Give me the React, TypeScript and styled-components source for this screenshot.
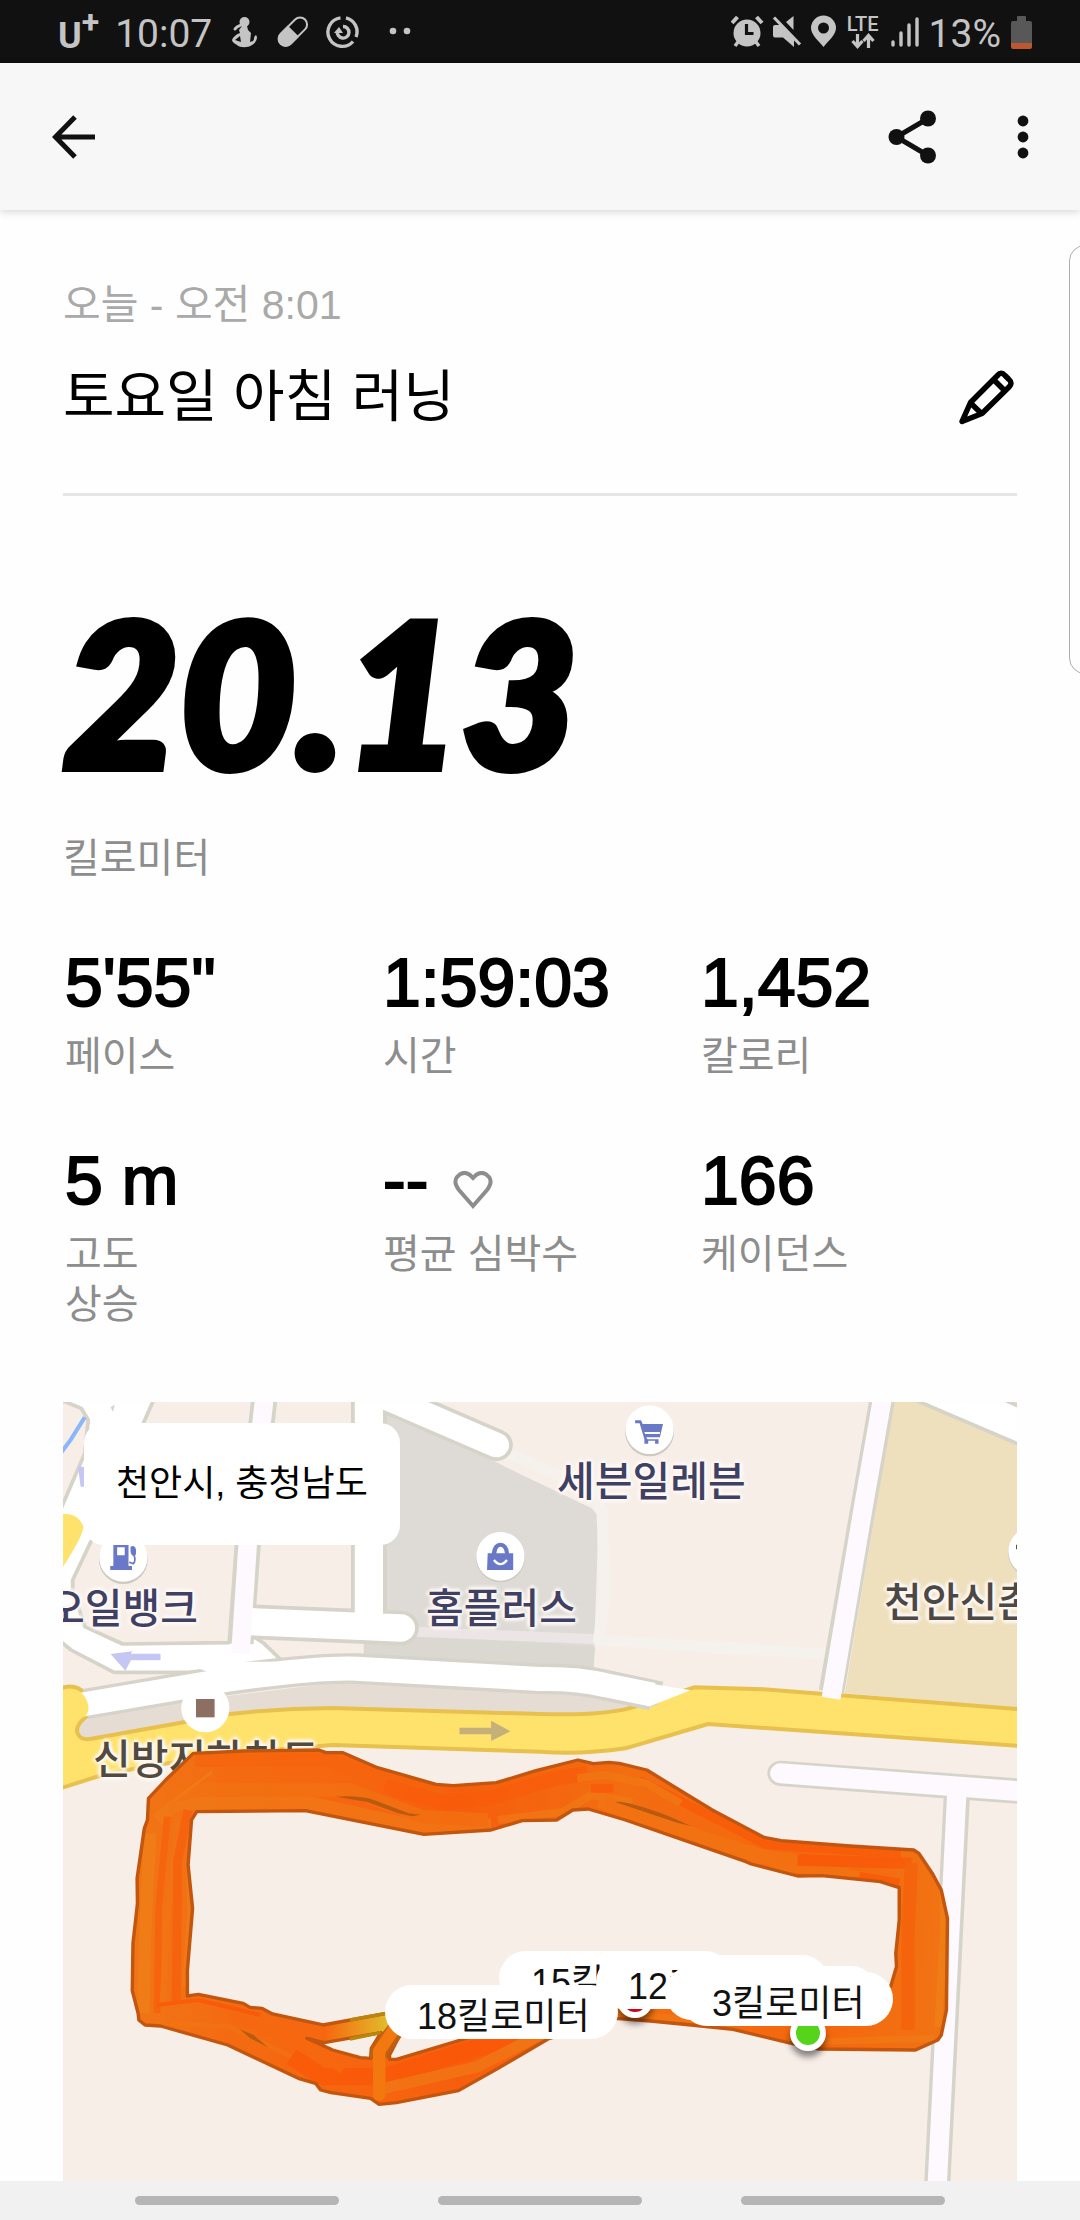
import React from "react";
import styled, { createGlobalStyle } from "styled-components";

const GlobalStyle = createGlobalStyle`
  * { box-sizing: border-box; }
  body { margin: 0; background: #fefefe; }
  button { border: 0; padding: 0; background: none; color: inherit; cursor: pointer; }
`;

const sans = `"Liberation Sans", "Noto Sans CJK KR", sans-serif`;

const Screen = styled.div`
  position: relative;
  display: flex;
  flex-direction: column;
  min-height: 100vh;
  overflow: hidden;
  background: #fefefe;
  color: #000;
  font-family: ${sans};
`;

const StatusBar = styled.header`
  display: flex;
  justify-content: space-between;
  height: 63px;
  padding: 0 48px 0 58px;
  background: #111;
  color: #c4c4c4;
  font-family: Roboto, sans-serif;
`;

const StatusGroup = styled.div<{ $gap: number }>`
  display: flex;
  align-items: center;
  gap: ${(p) => p.$gap}px;
`;

const Carrier = styled.span`
  display: flex;
  font-size: 36px;
  font-weight: 700;
  line-height: 48px;
  padding-top: 8px;
`;

const CarrierPlus = styled.span`
  font-size: 32px;
  line-height: 20px;
`;

const StatusText = styled.span`
  font-size: 39px;
  font-weight: 400;
  line-height: 48px;
  padding-top: 4px;
`;

const Network = styled.span`
  display: flex;
  flex-direction: column;
  align-items: center;
  font-size: 20px;
  font-weight: 500;
  line-height: 18px;
`;

const AppBar = styled.nav`
  position: relative;
  z-index: 1;
  display: flex;
  align-items: center;
  gap: 27px;
  height: 147px;
  padding: 0 15px 0 32px;
  background: #f7f7f7;
  box-shadow: 0 2px 8px rgba(0, 0, 0, 0.16);
`;

const BarButton = styled.button<{ $push?: boolean }>`
  display: flex;
  align-items: center;
  justify-content: center;
  width: 84px;
  height: 84px;
  margin-left: ${(p) => (p.$push ? "auto" : "0")};
  svg { display: block; }
`;

const Content = styled.main`
  flex: 1;
  display: flex;
  flex-direction: column;
  padding: 70px 63px 0;
`;

const DateLine = styled.p`
  margin: 0 0 35px;
  color: #a9a9a9;
  font-size: 41px;
  line-height: 50px;
`;

const TitleRow = styled.div`
  display: flex;
  align-items: center;
  justify-content: space-between;
  padding-bottom: 64px;
  border-bottom: 3px solid #e5e5e5;
`;

const Title = styled.h1`
  margin: 0;
  font-size: 56px;
  font-weight: 400;
  line-height: 64px;
`;

const EditButton = styled.button`
  width: 60px;
  height: 60px;
  svg { display: block; }
`;

const Distance = styled.div`
  display: flex;
  flex-direction: column;
  gap: 42px;
  padding: 95px 0 60px;
`;

const DistanceValue = styled.strong`
  font-family: Lato, sans-serif;
  font-size: 201px;
  font-style: italic;
  font-weight: 900;
  line-height: 200px;
  -webkit-text-stroke: 8px #000;
`;

const Label = styled.span`
  color: #8d8d8d;
  font-size: 40px;
  line-height: 50px;
`;

const Stats = styled.dl`
  display: grid;
  grid-template-columns: repeat(3, 1fr);
  row-gap: 60px;
  margin: 0 0 73px;
`;

const Stat = styled.div`
  display: flex;
  flex-direction: column-reverse;
  justify-content: flex-end;
  gap: 10px;
  padding-left: 2px;
`;

const StatValue = styled.dd`
  display: flex;
  align-items: center;
  gap: 25px;
  margin: 0;
  font-size: 68px;
  line-height: 78px;
  -webkit-text-stroke: 2px #000;
  svg { margin-top: 20px; }
`;

const MapPanel = styled.section`
  position: relative;
  flex: 1;
  min-height: 600px;
  overflow: hidden;
  background: #f7eee8;
`;

const MapLayer = styled.svg`
  position: absolute;
  left: 0;
  top: 0;
  display: block;
`;

const Place = styled.span<{ $x: number; $y: number; $color: string }>`
  position: absolute;
  left: ${(p) => p.$x}px;
  top: ${(p) => p.$y}px;
  color: ${(p) => p.$color};
  font-size: 41px;
  font-weight: 500;
  line-height: 50px;
  white-space: nowrap;
  text-shadow: 0 0 3px #fff8f4, 3px 0 3px #fff8f4, -3px 0 3px #fff8f4, 0 3px 3px #fff8f4, 0 -3px 3px #fff8f4;
`;

const CityCard = styled.div`
  position: absolute;
  left: 21px;
  top: 21px;
  padding: 36px 32px;
  border-radius: 20px;
  background: #fff;
  font-size: 36px;
  line-height: 50px;
  white-space: nowrap;
`;

const Marker = styled.span<{ $x: number; $y: number; $color: string }>`
  position: absolute;
  left: ${(p) => p.$x}px;
  top: ${(p) => p.$y}px;
  width: 36px;
  height: 36px;
  border: 6px solid #fff;
  border-radius: 50%;
  background: ${(p) => p.$color};
  box-shadow: 0 6px 6px rgba(0, 0, 0, 0.45);
`;

const KmPill = styled.span<{ $x: number; $y: number }>`
  position: absolute;
  left: ${(p) => p.$x}px;
  top: ${(p) => p.$y}px;
  padding: 10px 28px 0 32px;
  border-radius: 27px;
  background: #fff;
  color: #111;
  font-size: 36px;
  line-height: 44px;
  white-space: nowrap;
`;

const EdgeHandle = styled.div`
  position: absolute;
  z-index: 2;
  top: 245px;
  right: -29px;
  width: 40px;
  height: 429px;
  border: 1px solid #adadad;
  border-radius: 16px;
`;

const SystemNav = styled.footer`
  display: flex;
  align-items: center;
  justify-content: center;
  gap: 99px;
  height: 39px;
  background: #f1f1f1;
`;

const NavButton = styled.button`
  width: 204px;
  height: 9px;
  border-radius: 5px;
  background: #b5b5b5;
`;

const stats = [
  { value: `5'55"`, label: "페이스" },
  { value: "1:59:03", label: "시간" },
  { value: "1,452", label: "칼로리" },
  { value: "5 m", label: "고도\n상승" },
  { value: "--", label: "평균 심박수", heart: true },
  { value: "166", label: "케이던스" },
];

const StatLabel = styled(Label)`
  white-space: pre-line;
`;

const kilometres = [
  { km: 15, x: 436, y: 549 },
  { km: 18, x: 322, y: 583 },
  { km: 12, x: 533, y: 553 },
  { km: 6, x: 602, y: 564 },
  { km: 3, x: 617, y: 570 },
];

const INK = "#c4c4c4";

function NotificationIcons() {
  return (
    <svg width="184" height="36" viewBox="231 14 184 36" fill={INK} aria-hidden="true">
      <circle cx="247.500" cy="22" r="5" />
      <path d="M245 26h5l1 4 3 3-1 9 3-1c2-2 0-4 3-6l1 2c0 4-3 7-5 8-4 3-12 3-15 0-3-2-5-3-5-5 1-3 5-6 8-7l-1-3z" />
      <path d="M238 29l2-2 4-2" stroke={INK} strokeWidth="3" fill="none" strokeLinecap="round" />
      <path d="M238 40l5-4 1 6z" fill="#111" />
      <g transform="rotate(45 296 31.500)">
        <rect x="289" y="14.500" width="14" height="34" rx="7" fill="none" stroke={INK} strokeWidth="2" />
        <path d="M288 31h16v11a8 8 0 0 1-16 0z" />
      </g>
      <g fill="none" stroke={INK} strokeWidth="3.400">
        <path d="M349 17.800A14.300 14.300 0 0 1 359 37" />
        <path d="M356 41.500A14.300 14.300 0 1 1 343.500 17.900" />
        <path d="M346 26.500A5.800 5.800 0 1 1 340.500 31" />
      </g>
      <path d="M337 33l5-6 4 6z" />
      <circle cx="396" cy="31" r="3.300" />
      <circle cx="410" cy="31" r="3.300" />
    </svg>
  );
}

function SystemIcons() {
  return (
    <svg width="106" height="36" viewBox="728 14 106 36" fill={INK} aria-hidden="true">
      <circle cx="744" cy="33" r="13.500" />
      <path d="M729 23l5.500-6M759 23l-5.500-6" stroke={INK} strokeWidth="4" />
      <path d="M735 42l-3 4M753 42l3 4" stroke={INK} strokeWidth="3.500" />
      <path d="M743.500 24v9.500h7" fill="none" stroke="#111" strokeWidth="3.200" />
      <path d="M770 27q0-2 2-2h7l12 13v9l-11-9.500h-8q-2 0-2-2z" />
      <path d="M783 22l7.500-6v14z" />
      <path d="M771 17.500l26 27" stroke={INK} strokeWidth="3.200" />
      <path fillRule="evenodd" d="M820.500 15.500a12.500 12.500 0 0 1 12.500 12.500c0 7-8 13-12.500 19-4.500-6-12.500-12-12.500-19a12.500 12.500 0 0 1 12.500-12.500zm0 7a5.500 5.500 0 1 0 0 11a5.500 5.500 0 1 0 0-11z" />
    </svg>
  );
}

function BaseMap() {
  return (
    <MapLayer width="954" height="779" viewBox="0 0 954 779" aria-hidden="true">
      <g transform="translate(-23 -22) scale(0.34439 0.33333)" strokeLinejoin="round">
        <path fill="#dedbd6" d="M1000 60L1350 260 1602 385 1622 410 1607 870 960 860V60z" />
        <path fill="#dbd7d1" d="M940 790L1100 765 1612 800 1607 870 940 840z" />
        <path fill="none" stroke="#ebe5e5" strokeWidth="30" d="M1090 755L1616 778" />
        <path fill="none" stroke="#f5f2ed" strokeWidth="32" d="M1350 215L1602 330 1632 395 1640 640 1622 780 2272 822" />
        <path fill="#eedfbd" d="M2479 66H2850V985L2337 940z" />
        <path fill="#fff" stroke="#d6d3c9" strokeWidth="11" d="M2530 55L2845 194V80L2790 55z" />

        <path fill="#fff" stroke="#d6d3c9" strokeWidth="11" d="M50 60L75 66 120 85 140 120 130 220 55 400V780L90 810 215 877H560L700 840 650 790 610 762 548 788 240 792 130 740 95 630V600L150 480 330 60z" />
        <path fill="#d6d3c9" d="M205 82l12-8-5 22z" />

        <path fill="none" stroke="#d6d3c9" strokeWidth="76" d="M652 50L603 495 582 790" />
        <g fill="none" stroke="#d6d3c9" strokeWidth="104" strokeLinecap="round">
          <path d="M955 20V735M600 725L950 740 1048 744" />
          <path d="M1000 50L1325 195" strokeWidth="96" />
        </g>
        <g fill="none" stroke="#fff" strokeWidth="82" strokeLinecap="round">
          <path d="M955 20V735M610 725L950 740 1048 744" />
          <path d="M1000 50L1325 195" strokeWidth="74" />
        </g>
        <path fill="none" stroke="#fdf9ff" strokeWidth="54" d="M652 50L603 495 582 820" />

        <path fill="#e5ddd4" d="M130 1080L105 1045 140 1000 920 900 1568 935 1760 975 1552 1020 850 990z" />
        <path fill="#ffe26b" stroke="#e8c04d" strokeWidth="12" d="M50 930Q100 905 130 940L140 1005Q95 1040 112 1065 122 1082 150 1076L550 1002 Q700 985 850 984L1480 1003H1552Q1660 1000 1720 982L1900 922 2100 928 2850 988V1098L1940 1032 1700 1105Q1568 1125 1452 1115L850 1095Q500 1120 190 1182L50 1228z" />
        <path fill="none" stroke="#d6d3c9" strokeWidth="92" d="M132 972L540 900Q800 862 920 866L1450 897Q1560 895 1640 915L1800 950" />
        <path fill="#fff" d="M1740 905L1890 931 1772 978 1700 960z" />
        <path fill="none" stroke="#fff" strokeWidth="72" d="M115 975L540 900Q800 862 920 866L1450 897Q1560 895 1640 915L1780 944" />
        <path fill="#fff" d="M400 845L680 845 800 865 560 900z" />
        <path fill="#ffe26b" d="M67 936Q105 918 127 946 150 980 135 1005L67 1050z" />
        <path fill="#ffe26b" d="M67 402Q110 398 126 440 126 465 67 560z" />
        <path fill="#ffe26b" d="M1770 982L1910 932V1010H1770z" />

        <path fill="none" stroke="#d6d3c9" strokeWidth="74" d="M2447 50L2390 385 2298 935" />
        <path fill="none" stroke="#fdf9ff" strokeWidth="55" d="M2447 50L2390 385 2297 955" />
        <g fill="none" stroke="#d6d3c9" strokeWidth="76">
          <path strokeLinecap="round" d="M2150 1180L2850 1234" />
          <path d="M2663 1230L2605 2420" />
        </g>
        <g fill="none" stroke="#fdf9ff" strokeWidth="60">
          <path strokeLinecap="round" d="M2150 1180L2850 1234" />
          <path strokeWidth="56" d="M2663 1220L2605 2420" />
        </g>

        <path fill="none" stroke="#8ab7fb" strokeWidth="12" d="M60 220L90 178 130 112" />
        <path fill="#c6c6f5" d="M110 258L130 262V320H118zM205 822L268 814 264 821H350V841H264L248 872z" />
        <path fill="#c5b07a" d="M1218 1043H1310V1022L1366 1054 1310 1083V1063H1218z" />

        <g fill="#cfc9c4">
          <ellipse cx="242" cy="539" rx="71" ry="73" />
          <ellipse cx="1337" cy="534" rx="71" ry="73" />
          <ellipse cx="1770" cy="156" rx="71" ry="73" />
          <ellipse cx="2882" cy="519" rx="71" ry="73" />
        </g>
        <g fill="#fff">
          <ellipse cx="242" cy="532" rx="70" ry="73" />
          <ellipse cx="1337" cy="529" rx="70" ry="73" />
          <ellipse cx="1770" cy="149" rx="70" ry="73" />
          <ellipse cx="480" cy="984" rx="70" ry="73" />
          <ellipse cx="2882" cy="514" rx="70" ry="73" />
        </g>
        <path fill="#8d6e63" d="M453 957h54v55h-54z" />
        <path fill="#5d5750" d="M2834 494h10v14h-10z" />
        <g fill="#6a78c8">
          <path fillRule="evenodd" d="M213 480H257V558H267V570H204V558H213zM224 502V526H246V502z" />
          <path d="M263 500q16-8 16 16 0 14-8 12-8-4-8-14z" />
          <path fill="none" stroke="#6a78c8" strokeWidth="5" d="M273 525q6 18-2 26l-12-4" />
          <path fillRule="evenodd" d="M1300 520H1312Q1315 488 1337 488 1359 488 1362 520H1374V570H1298zM1325 520H1350Q1348 500 1337 500 1327 500 1325 520z" />
          <path fill="none" stroke="#fff" strokeWidth="7" d="M1318 540Q1337 565 1356 540" />
          <path d="M1728 121H1745L1750 132H1809L1800 172H1760L1764 178H1796V191H1786V182H1766V191H1755V178L1741 130H1728z" />
          <path fill="#fff" d="M1755 156H1800V162H1757z" />
        </g>
      </g>
    </MapLayer>
  );
}

const routeShape =
  "M315 235L365 180 445 100 590 93 810 90 830 98H880L980 143 1150 193 1200 197 1325 188 1440 152 1562 120 1607 131 1652 127 1682 130 1762 150 1952 270 2102 352 2152 362 2352 378 2537 390 2552 400 2592 462 2617 510 2635 595 2632 870 2617 945 2607 960 2542 990 2262 987 2172 968 2012 928 1862 912 1772 903 1672 895 1475 957 1330 1045 1215 1112 1035 1148 985 1153 960 1135 845 1118 815 1110 800 1090 750 1075 545 975 350 918 305 915 287 900 285 880 268 812 270 670 283 550 282 475 303 325 312 300z" +
  "M455 275L770 272 1115 343 1310 330 1400 302 1500 300 1547 270 1592 267 1700 300 2050 425 2065 432 2200 468 2270 467 2440 485 2495 503V600L2485 700 2487 740 2470 800 2350 860 1900 850 1672 855 1400 830 1005 880 822 915 675 882 645 865 610 862 590 850 460 823 428 828V750L443 565 430 435 440 300z" +
  "M775 955L825 968 990 938 962 985 960 1015 930 1013 850 990z" +
  "M1015 1005L1045 945 1260 948 1035 1018 1015 1018z";

function RouteMap() {
  return (
    <MapLayer width="954" height="779" viewBox="0 0 954 779" aria-hidden="true">
      <defs>
        <linearGradient id="link" x1="0" x2="1"><stop stopColor="#f6650f" /><stop offset="1" stopColor="#e0c02c" /></linearGradient>
        <linearGradient id="base" gradientUnits="userSpaceOnUse" x1="270" y1="0" x2="2640" y2="0">
          <stop stopColor="#f17516" /><stop offset=".12" stopColor="#f46b12" /><stop offset=".3" stopColor="#f66510" />
          <stop offset=".4" stopColor="#f65f0e" /><stop offset=".6" stopColor="#f36d12" /><stop offset=".85" stopColor="#f5680f" /><stop offset="1" stopColor="#f07415" />
        </linearGradient>
        <clipPath id="routeClip">
          <path clipRule="evenodd" d={routeShape} />
        </clipPath>
      </defs>
      <g transform="translate(-23 318) scale(0.34439 0.33333)" strokeLinejoin="round">
        <path fill="url(#base)" fillRule="evenodd" d={routeShape} />
        <g clipPath="url(#routeClip)" fill="none" opacity="0.65">
          <path stroke="#f07c17" strokeWidth="40" d="M340 300L400 250 780 248 1115 325 1310 315" />
          <path stroke="#f27313" strokeWidth="40" d="M380 230L480 208 900 210 1110 290 1300 300" />
          <path stroke="#f6640d" strokeWidth="38" d="M450 122L830 120 1000 180 1180 225" />
          <path stroke="#f95b0b" strokeWidth="44" d="M1000 200L1180 250 1300 235 1500 175 1590 160" />
          <path stroke="#f07b16" strokeWidth="24" d="M1330 300L1520 275 1600 225 1720 245" />
          <path stroke="#fa5709" strokeWidth="26" d="M1600 205L1665 205M1740 180L2110 375 2500 402" />
          <path stroke="#f17814" strokeWidth="24" d="M1560 175L1640 165 1760 190 1860 250M1620 250L2080 395 2200 420" />
          <path stroke="#f27613" strokeWidth="42" d="M1640 250L1720 280 2080 410 2350 440" />
          <path stroke="#fb5407" strokeWidth="34" d="M2200 420L2530 430M2360 470L2495 492" />
          <path stroke="#f27714" strokeWidth="18" d="M2120 445L2380 462" />
          <path stroke="#f65e0c" strokeWidth="38" d="M2530 430L2520 660 2520 930" />
          <path stroke="#f27013" strokeWidth="36" d="M2570 430L2575 700 2560 970" />
          <path stroke="#ee8318" strokeWidth="22" d="M2622 510L2626 600 2608 920" />
          <path stroke="#f07b16" strokeWidth="20" d="M2260 965L2600 955M1680 880L2012 910" />
          <path stroke="#ee8219" strokeWidth="36" d="M320 340L305 650 300 880" />
          <path stroke="#f85f0c" strokeWidth="20" d="M370 290L345 560 340 880" />
          <path stroke="#f27614" strokeWidth="16" d="M400 290L370 600 355 850" />
          <path stroke="#f75d0c" strokeWidth="26" d="M430 270L400 420 395 850" />
          <path stroke="#ee7d17" strokeWidth="16" d="M430 420L435 570 420 800" />
          <path stroke="#ef8118" strokeWidth="8" d="M500 155L385 245" />
          <path stroke="#fc5206" strokeWidth="12" d="M340 855L460 840 640 885" />
          <path stroke="#f27414" strokeWidth="14" d="M380 910L550 920 750 1020" />
          <path stroke="#fb5507" strokeWidth="52" d="M730 1010L820 1070 1000 1070 1220 1000 1460 925" />
          <path stroke="#f07c16" strokeWidth="34" d="M1000 1105L1270 1040 1480 930" />
          <path stroke="#f6680f" strokeWidth="26" d="M560 890L780 980 880 1050" />
        </g>
        <path fill="#b95a10" d="M860 230Q930 226 970 240L1070 280 1105 284 1080 289 1040 280 950 246zM1670 246Q1700 240 1830 290L1890 318 1850 308zM580 928L620 945 662 982 610 955z" />
        <path fill="url(#link)" stroke="none" d="M822 918L1020 880V935L822 968z" />
        <path fill="none" stroke="#c3560f" strokeWidth="10" d={routeShape} />
        <path fill="none" stroke="#b8860f" strokeWidth="10" d="M900 900L1020 877M900 957L990 938" />
        <path fill="none" stroke="#c0600f" strokeWidth="52" d="M1040 920L985 993V1015" />
        <path fill="none" stroke="#f2780f" strokeWidth="36" strokeLinecap="round" d="M1040 910L985 993V1125" />
      </g>
    </MapLayer>
  );
}

export default function App() {
  return (
    <>
      <GlobalStyle />
      <Screen>
        <StatusBar>
          <StatusGroup $gap={16}>
            <Carrier>U<CarrierPlus>+</CarrierPlus></Carrier>
            <StatusText>10:07</StatusText>
            <NotificationIcons />
          </StatusGroup>
          <StatusGroup $gap={10}>
            <SystemIcons />
            <Network>
              LTE
              <svg width="24" height="16" viewBox="0 0 24 16" fill="none" stroke={INK} strokeWidth="3.200" aria-hidden="true">
                <path d="M6.500 1v12M1.500 8l5 5.500 5-5.500M17.500 15V3M12.500 8l5-5.500 5 5.500" />
              </svg>
            </Network>
            <svg width="30" height="32" viewBox="0 0 30 32" stroke={INK} strokeWidth="3.400" strokeLinecap="round" aria-hidden="true">
              <path d="M4 29v-3M12 29V17M20 29V9M28 29V3" />
            </svg>
            <StatusText>13%</StatusText>
            <svg width="21" height="34" viewBox="0 0 21 34" aria-hidden="true">
              <path fill="#585858" d="M6 2q0-1 1-1h7q1 0 1 1v4h4q2 0 2 2v20H0V8q0-2 2-2h4z" />
              <path fill="#bd5732" d="M0 28h21v4q0 2-2 2H2q-2 0-2-2z" />
            </svg>
          </StatusGroup>
        </StatusBar>

        <AppBar>
          <BarButton aria-label="뒤로">
            <svg width="44" height="44" viewBox="0 0 44 44" fill="none" stroke="#111" strokeWidth="5">
              <path d="M43 22H4M23 2L3.500 22 23 42" />
            </svg>
          </BarButton>
          <BarButton $push aria-label="공유">
            <svg width="48" height="54" viewBox="0 0 48 54" fill="#111">
              <path d="M40 8.500L8.500 27 40 45.500" fill="none" stroke="#111" strokeWidth="5" />
              <circle cx="40" cy="8.500" r="8" /><circle cx="8.500" cy="27" r="8" /><circle cx="40" cy="45.500" r="8" />
            </svg>
          </BarButton>
          <BarButton aria-label="더보기">
            <svg width="12" height="44" viewBox="0 0 12 44" fill="#111">
              <circle cx="6" cy="6" r="5.400" /><circle cx="6" cy="22" r="5.400" /><circle cx="6" cy="38" r="5.400" />
            </svg>
          </BarButton>
        </AppBar>

        <Content>
          <DateLine>오늘 - 오전 8:01</DateLine>
          <TitleRow>
            <Title>토요일 아침 러닝</Title>
            <EditButton aria-label="제목 수정">
              <svg width="60" height="60" viewBox="957 366 60 60" fill="none" stroke="#000" strokeWidth="5.500" strokeLinejoin="round">
                <path d="M962 420.500L970.500 401.500 997.500 374.500Q1001 370 1005 374.500L1009 378.500Q1013 382 1009 386L982 412.500z" />
                <path d="M993.500 378.500L1004.500 389.500M970.500 402L981.500 412.500" />
              </svg>
            </EditButton>
          </TitleRow>

          <Distance>
            <DistanceValue>20.13</DistanceValue>
            <Label>킬로미터</Label>
          </Distance>

          <Stats>
            {stats.map((s) => (
              <Stat key={s.label}>
                <StatLabel as="dt">{s.label}</StatLabel>
                <StatValue>
                  {s.value}
                  {s.heart && (
                    <svg width="40" height="38" viewBox="0 0 40 38" fill="none" stroke="#8d8d8d" strokeWidth="4" aria-hidden="true">
                      <path d="M20 35L6 19Q0 11 4 6 10-1 17 4L20 7 23 4Q30-1 36 6 40 11 34 19z" />
                    </svg>
                  )}
                </StatValue>
              </Stat>
            ))}
          </Stats>

          <MapPanel aria-label="러닝 경로">
            <BaseMap />
            <Place $x={-16} $y={182} $color="#3f4164">오일뱅크</Place>
            <Place $x={363} $y={182} $color="#3f4164">홈플러스</Place>
            <Place $x={494} $y={55} $color="#3f4164">세븐일레븐</Place>
            <Place $x={821} $y={176} $color="#4c4845">천안신촌</Place>
            <Place $x={30} $y={333} $color="#524a3c">신방지하차도</Place>
            <RouteMap />
            <Marker $x={554} $y={580} $color="#d0021b" />
            <Marker $x={727} $y={613} $color="#55d41b" />
            {kilometres.map((k) => (
              <KmPill key={k.km} $x={k.x} $y={k.y}>{k.km}킬로미터</KmPill>
            ))}
            <CityCard>천안시, 충청남도</CityCard>
          </MapPanel>
        </Content>

        <EdgeHandle />
        <SystemNav>
          <NavButton aria-label="최근 앱" />
          <NavButton aria-label="홈" />
          <NavButton aria-label="이전" />
        </SystemNav>
      </Screen>
    </>
  );
}
